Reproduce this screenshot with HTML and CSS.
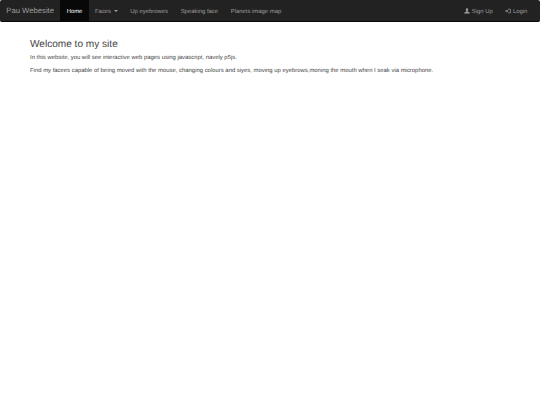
FILE: index.html
```html
<!DOCTYPE html>
<html lang="en">
<head>
    <meta charset="UTF-8">
    <meta name="viewport" content="width=device-width, initial-scale=1.0">
    <title>Pau Webesite</title>
    <link rel="stylesheet" href="styles.css">
</head>
<body>
    <nav class="navbar">
        <a class="brand" href="#">Pau Webesite</a>
        <ul class="nav">
            <li class="active"><a href="#">Home</a></li>
            <li><a href="#">Faces <span class="caret"></span></a></li>
            <li><a href="#">Up eyebrowes</a></li>
            <li><a href="#">Speaking face</a></li>
            <li><a href="#">Planets image map</a></li>
        </ul>
        <ul class="nav nav-right">
            <li><a href="#">
                <svg class="icon" viewBox="0 0 12 12"><path d="M6 0.5C4.4 0.5 3.6 1.8 3.6 3.4C3.6 4.6 4.1 5.6 4.8 6.2V7.2L1 8.8C0.6 9 0.4 9.4 0.4 9.8V11.2H11.6V9.8C11.6 9.4 11.4 9 11 8.8L7.2 7.2V6.2C7.9 5.6 8.4 4.6 8.4 3.4C8.4 1.8 7.6 0.5 6 0.5Z"/></svg>
                Sign Up</a></li>
            <li><a href="#">
                <svg class="icon" viewBox="0 0 12 12"><path d="M0.5 4.8H3.4V2.8L6.8 6L3.4 9.2V7.2H0.5Z"/><path d="M6.2 1.5H9.6C10.7 1.5 11.5 2.3 11.5 3.4V8.6C11.5 9.7 10.7 10.5 9.6 10.5H6.2V9.2H9.4C9.9 9.2 10.2 8.9 10.2 8.4V3.6C10.2 3.1 9.9 2.8 9.4 2.8H6.2Z"/></svg>
                Login</a></li>
        </ul>
    </nav>
    <div class="container">
        <h3>Welcome to my site</h3>
        <p>In this website, you will see interactive web pages using javascript, navely p5js.</p>
        <p>Find my facees capable of being moved with the mouse, changing colours and siyes, moving up eyebrows,moning the mouth when I seak via microphone.</p>
    </div>
</body>
</html>
```

FILE: styles.css
```css
body {
    margin: 0;
    background-color: #fff;
    color: #444;
    font-family: "Liberation Sans", Arial, sans-serif;
    font-size: 5.91px;
    line-height: 8.4px;
    text-rendering: geometricPrecision;
}

a {
    text-decoration: none;
    color: #9d9d9d;
}

.navbar {
    display: flex;
    align-items: stretch;
    height: 21px;
    background-color: #222;
    border-bottom: 1px solid #080808;
    border-radius: 2px;
}

.brand {
    padding: 0 6.3px;
    font-size: 7.7px;
    line-height: 21px;
}

.nav {
    display: flex;
    margin: 0;
    padding: 0;
    list-style: none;
}

.nav a {
    display: block;
    box-sizing: border-box;
    height: 21px;
    padding: 3px 6.3px 0;
    line-height: 18px;
}

.nav .active a {
    background-color: #080808;
    color: #fff;
}

.nav-right {
    margin-left: auto;
    margin-right: 6.3px;
}

.caret {
    display: inline-block;
    margin-left: 1px;
    vertical-align: middle;
    border-top: 2px solid;
    border-left: 2px solid transparent;
    border-right: 2px solid transparent;
}

.icon {
    width: 6px;
    height: 6px;
    fill: #9d9d9d;
    vertical-align: -1px;
}

.container {
    padding: 0 30px;
}

h3 {
    margin: 17px 0 4.2px;
    font-size: 10.08px;
    font-weight: 500;
    line-height: 11px;
}

p {
    margin: 0 0 4.2px;
}
```
